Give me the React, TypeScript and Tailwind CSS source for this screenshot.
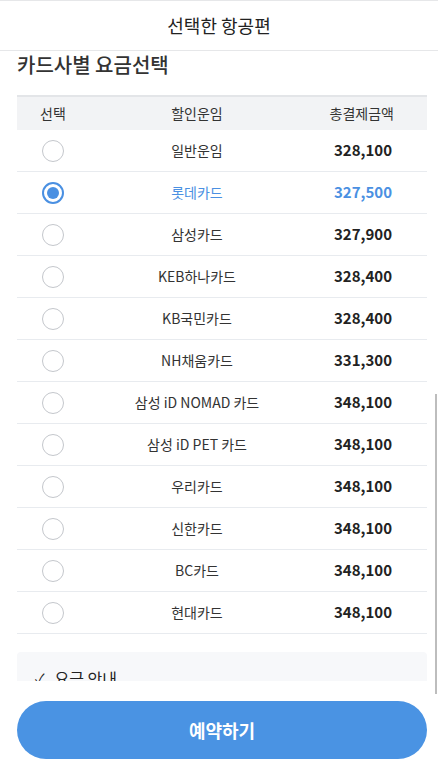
import React from "react";

const fares = [
  { name: "일반운임", price: "328,100" },
  { name: "롯데카드", price: "327,500", selected: true },
  { name: "삼성카드", price: "327,900" },
  { name: "KEB하나카드", price: "328,400" },
  { name: "KB국민카드", price: "328,400" },
  { name: "NH채움카드", price: "331,300" },
  { name: "삼성 iD NOMAD 카드", price: "348,100" },
  { name: "삼성 iD PET 카드", price: "348,100" },
  { name: "우리카드", price: "348,100" },
  { name: "신한카드", price: "348,100" },
  { name: "BC카드", price: "348,100" },
  { name: "현대카드", price: "348,100" },
];

function Radio({ checked }: { checked?: boolean }) {
  return checked ? (
    <div className="w-[22px] h-[22px] rounded-full border-2 border-[#4a90e2] flex items-center justify-center">
      <div className="w-[12px] h-[12px] rounded-full bg-[#4a90e2]" />
    </div>
  ) : (
    <div className="w-[22px] h-[22px] rounded-full border border-[#c4c7cc] bg-white" />
  );
}

export default function App() {
  return (
    <div
      className="relative w-[438px] h-[761px] bg-white overflow-hidden text-[#222]"
      style={{ fontFamily: '"Noto Sans CJK KR", "Noto Sans", sans-serif' }}
    >
      {/* Header */}
      <div className="h-[51px] border-t border-b border-[#e6e7e9] flex items-center justify-center">
        <h1 className="text-[18px] text-[#222]">선택한 항공편</h1>
      </div>

      {/* Scroll area */}
      <div className="h-[630px] overflow-hidden pl-[17px] pr-[11px]">
        <h2 className="text-[20px] font-medium leading-[28px] text-[#333]">
          카드사별 요금선택
        </h2>

        <div className="mt-[16px] border-t-2 border-[#e3e5e8]">
          <div className="grid grid-cols-[72px_1fr_122px] h-[33px] items-center bg-[#f2f3f5] text-[14px] text-[#333]">
            <span className="text-center">선택</span>
            <span className="text-center">할인운임</span>
            <span className="text-right pr-[33px]">총결제금액</span>
          </div>
          {fares.map((f) => (
            <div
              key={f.name}
              className="grid grid-cols-[72px_1fr_122px] h-[42px] items-center border-b border-[#e8ebef]"
            >
              <div className="flex justify-center">
                <Radio checked={f.selected} />
              </div>
              <span
                className={`text-center text-[14px] ${
                  f.selected ? "text-[#4a90e2]" : "text-[#333]"
                }`}
              >
                {f.name}
              </span>
              <span
                className={`text-right pr-[35px] text-[15px] font-bold ${
                  f.selected ? "text-[#4a90e2]" : "text-[#222]"
                }`}
              >
                {f.price}
              </span>
            </div>
          ))}
        </div>

        <div className="mt-[18px] bg-[#f7f8fa] rounded-t-[4px] h-[60px] px-[18px] pt-[14px]">
          <div className="flex items-center gap-[10px] text-[16px] text-[#222]">
            <span className="text-[14px]">✓</span>
            <span>요금 안내</span>
          </div>
        </div>
      </div>

      {/* Button */}
      <div className="pl-[17px] pr-[11px] pt-[20px]">
        <button className="w-full h-[58px] rounded-full bg-[#4a93e3] text-white text-[18px] font-bold">
          예약하기
        </button>
      </div>

      {/* scrollbar */}
      <div className="absolute right-[1px] top-[394px] w-[2px] h-[300px] bg-[#bdbdbd]" />
    </div>
  );
}
